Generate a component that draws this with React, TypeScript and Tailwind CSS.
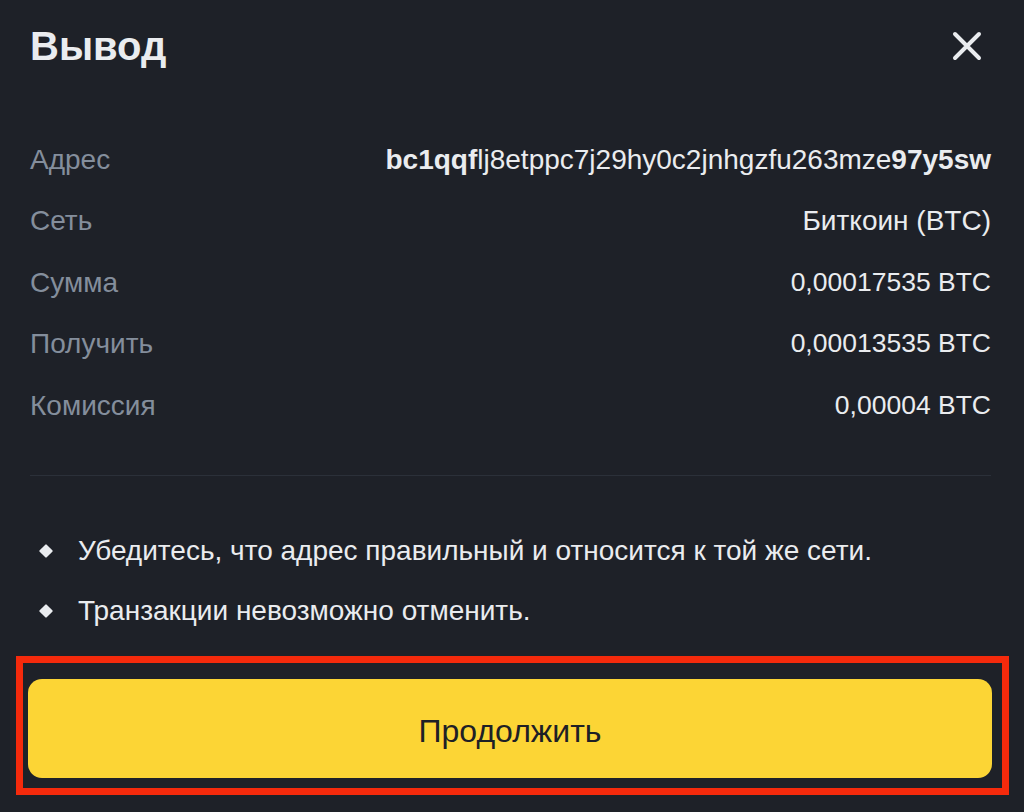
import React from "react";

const rows: { label: string; value: React.ReactNode; size: string }[] = [
  {
    label: "Адрес",
    value: (
      <span>
        <span className="font-bold">bc1qqf</span>lj8etppc7j29hy0c2jnhgzfu263mze
        <span className="font-bold">97y5sw</span>
      </span>
    ),
    size: "text-[28px]",
  },
  { label: "Сеть", value: "Биткоин (BTC)", size: "text-[28px]" },
  { label: "Сумма", value: "0,00017535 BTC", size: "text-[26.5px]" },
  { label: "Получить", value: "0,00013535 BTC", size: "text-[26.5px]" },
  { label: "Комиссия", value: "0,00004 BTC", size: "text-[26.5px]" },
];

export default function App() {
  return (
    <div
      className="w-[1024px] h-[812px] bg-[#1e2128] text-[#eaecef] pl-[30px] pr-[33px] flex flex-col overflow-hidden"
      style={{ fontFamily: '"Liberation Sans", Arial, sans-serif' }}
    >
      <div className="flex items-center justify-between pt-[22px] h-[70px]">
        <h1 className="text-[40px] font-bold leading-none text-[#eaecef]">Вывод</h1>
        <svg width="30" height="30" viewBox="0 0 30 30" className="mr-[9px]">
          <path d="M3 3 L27 27 M27 3 L3 27" stroke="#eaecef" strokeWidth="4" strokeLinecap="round" />
        </svg>
      </div>

      <div className="flex flex-col mt-[59px]">
        {rows.map((r) => (
          <div key={r.label} className="flex items-center justify-between h-[61.5px]">
            <span className="text-[28px] text-[#848e9c]">{r.label}</span>
            <span className={`${r.size} text-[#eaecef]`}>{r.value}</span>
          </div>
        ))}
      </div>

      <div className="h-px bg-[#2b3039] mt-[38px]" />

      <div className="flex flex-col mt-[60px] gap-[30px]">
        {["Убедитесь, что адрес правильный и относится к той же сети.", "Транзакции невозможно отменить."].map((t) => (
          <div key={t} className="flex items-center h-[30px]">
            <span className="w-[10px] h-[10px] bg-[#eaecef] rotate-45 ml-[11px] mr-[27px] rounded-[1px]" />
            <span className="text-[28px] text-[#eaecef]">{t}</span>
          </div>
        ))}
      </div>

      <div className="relative mt-[53px]">
        <button className="w-[964px] -ml-[2px] h-[99px] pt-[6px] rounded-[14px] bg-[#fcd535] text-[#1e2026] text-[32px] flex items-center justify-center">
          Продолжить
        </button>
        <div className="absolute left-[-14px] top-[-23px] w-[993px] h-[139px] border-[7px] border-[#f52a0c] pointer-events-none" />
      </div>
    </div>
  );
}
